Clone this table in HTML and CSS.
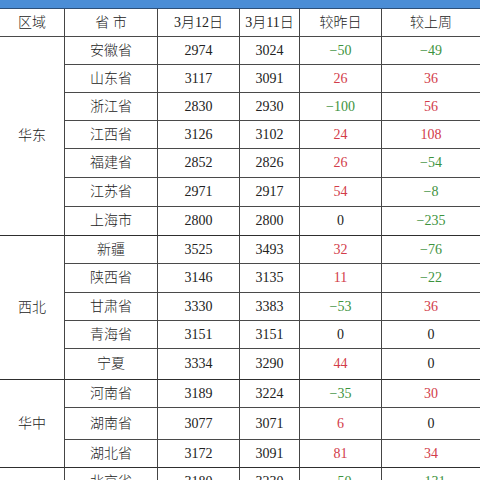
FILE: index.html
```html
<!DOCTYPE html>
<html lang="zh-CN">
<head>
<meta charset="utf-8">
<title>价格表</title>
<link rel="stylesheet" href="styles.css">
</head>
<body>
<div class="topbar"></div>
<table class="grid">
  <colgroup>
    <col class="c-region"><col class="c-prov"><col class="c-d12"><col class="c-d11"><col class="c-day"><col class="c-week">
  </colgroup>
  <thead>
    <tr class="h28">
      <th>区域</th><th>省 市</th><th>3月12日</th><th>3月11日</th><th>较昨日</th><th>较上周</th>
    </tr>
  </thead>
  <tbody>
    <tr class="h28"><td class="region gend" rowspan="7">华东</td><td>安徽省</td><td>2974</td><td>3024</td><td class="dn">−50</td><td class="dn">−49</td></tr>
    <tr class="h28"><td>山东省</td><td>3117</td><td>3091</td><td class="up">26</td><td class="up">36</td></tr>
    <tr class="h28"><td>浙江省</td><td>2830</td><td>2930</td><td class="dn">−100</td><td class="up">56</td></tr>
    <tr class="h28"><td>江西省</td><td>3126</td><td>3102</td><td class="up">24</td><td class="up">108</td></tr>
    <tr class="h29"><td>福建省</td><td>2852</td><td>2826</td><td class="up">26</td><td class="dn">−54</td></tr>
    <tr class="h29"><td>江苏省</td><td>2971</td><td>2917</td><td class="up">54</td><td class="dn">−8</td></tr>
    <tr class="h29 last"><td>上海市</td><td>2800</td><td>2800</td><td>0</td><td class="dn">−235</td></tr>

    <tr class="h28"><td class="region gend" rowspan="5">西北</td><td>新疆</td><td>3525</td><td>3493</td><td class="up">32</td><td class="dn">−76</td></tr>
    <tr class="h29"><td>陕西省</td><td>3146</td><td>3135</td><td class="up">11</td><td class="dn">−22</td></tr>
    <tr class="h28"><td>甘肃省</td><td>3330</td><td>3383</td><td class="dn">−53</td><td class="up">36</td></tr>
    <tr class="h28"><td>青海省</td><td>3151</td><td>3151</td><td>0</td><td>0</td></tr>
    <tr class="h31 last"><td>宁夏</td><td>3334</td><td>3290</td><td class="up">44</td><td>0</td></tr>

    <tr class="h28"><td class="region gend" rowspan="3">华中</td><td>河南省</td><td>3189</td><td>3224</td><td class="dn">−35</td><td class="up">30</td></tr>
    <tr class="h32"><td>湖南省</td><td>3077</td><td>3071</td><td class="up">6</td><td>0</td></tr>
    <tr class="h28 last"><td>湖北省</td><td>3172</td><td>3091</td><td class="up">81</td><td class="up">34</td></tr>

    <tr class="h28"><td class="region" rowspan="2">华北</td><td>北京省</td><td>3180</td><td>3230</td><td class="dn">−50</td><td class="dn">−131</td></tr>
    <tr class="h28"><td>天津市</td><td>3190</td><td>3240</td><td class="dn">−50</td><td class="dn">−120</td></tr>
  </tbody>
</table>
</body>
</html>
```
FILE: styles.css
```css
html, body {
  margin: 0;
  padding: 0;
  background: #ffffff;
  overflow: hidden;
}

body {
  width: 480px;
  height: 480px;
  font-family: "Liberation Serif", "Noto Sans CJK SC", serif;
  font-size: 14px;
  color: #222222;
}

.topbar {
  height: 9px;
  box-sizing: border-box;
  background: #4a8dd6;
  border-bottom: 1px solid #2c4f78;
}

.grid {
  width: 480px;
  table-layout: fixed;
  border-collapse: separate;
  border-spacing: 0;
}

.c-region { width: 65px; }
.c-prov { width: 93px; }
.c-d12 { width: 82px; }
.c-d11 { width: 60px; }
.c-day { width: 82px; }
.c-week { width: 98px; }

.grid th,
.grid td {
  box-sizing: border-box;
  padding: 0;
  text-align: center;
  vertical-align: middle;
  font-weight: 300;
  line-height: 16px;
  border-right: 1px solid #454545;
  border-bottom: 1px solid #4a4a4a;
  white-space: nowrap;
}

.grid th:last-child,
.grid td:last-child {
  border-right: none;
}

.h28 > th, .h28 > td { height: 28px; }
.h29 > td { height: 29px; }
.h31 > td { height: 31px; }
.h32 > td { height: 32px; }

.last > td,
.region.gend {
  border-bottom: 1px solid #2e2e2e;
}

.up { color: #d23c4a; }
.dn { color: #3e933e; }
```
